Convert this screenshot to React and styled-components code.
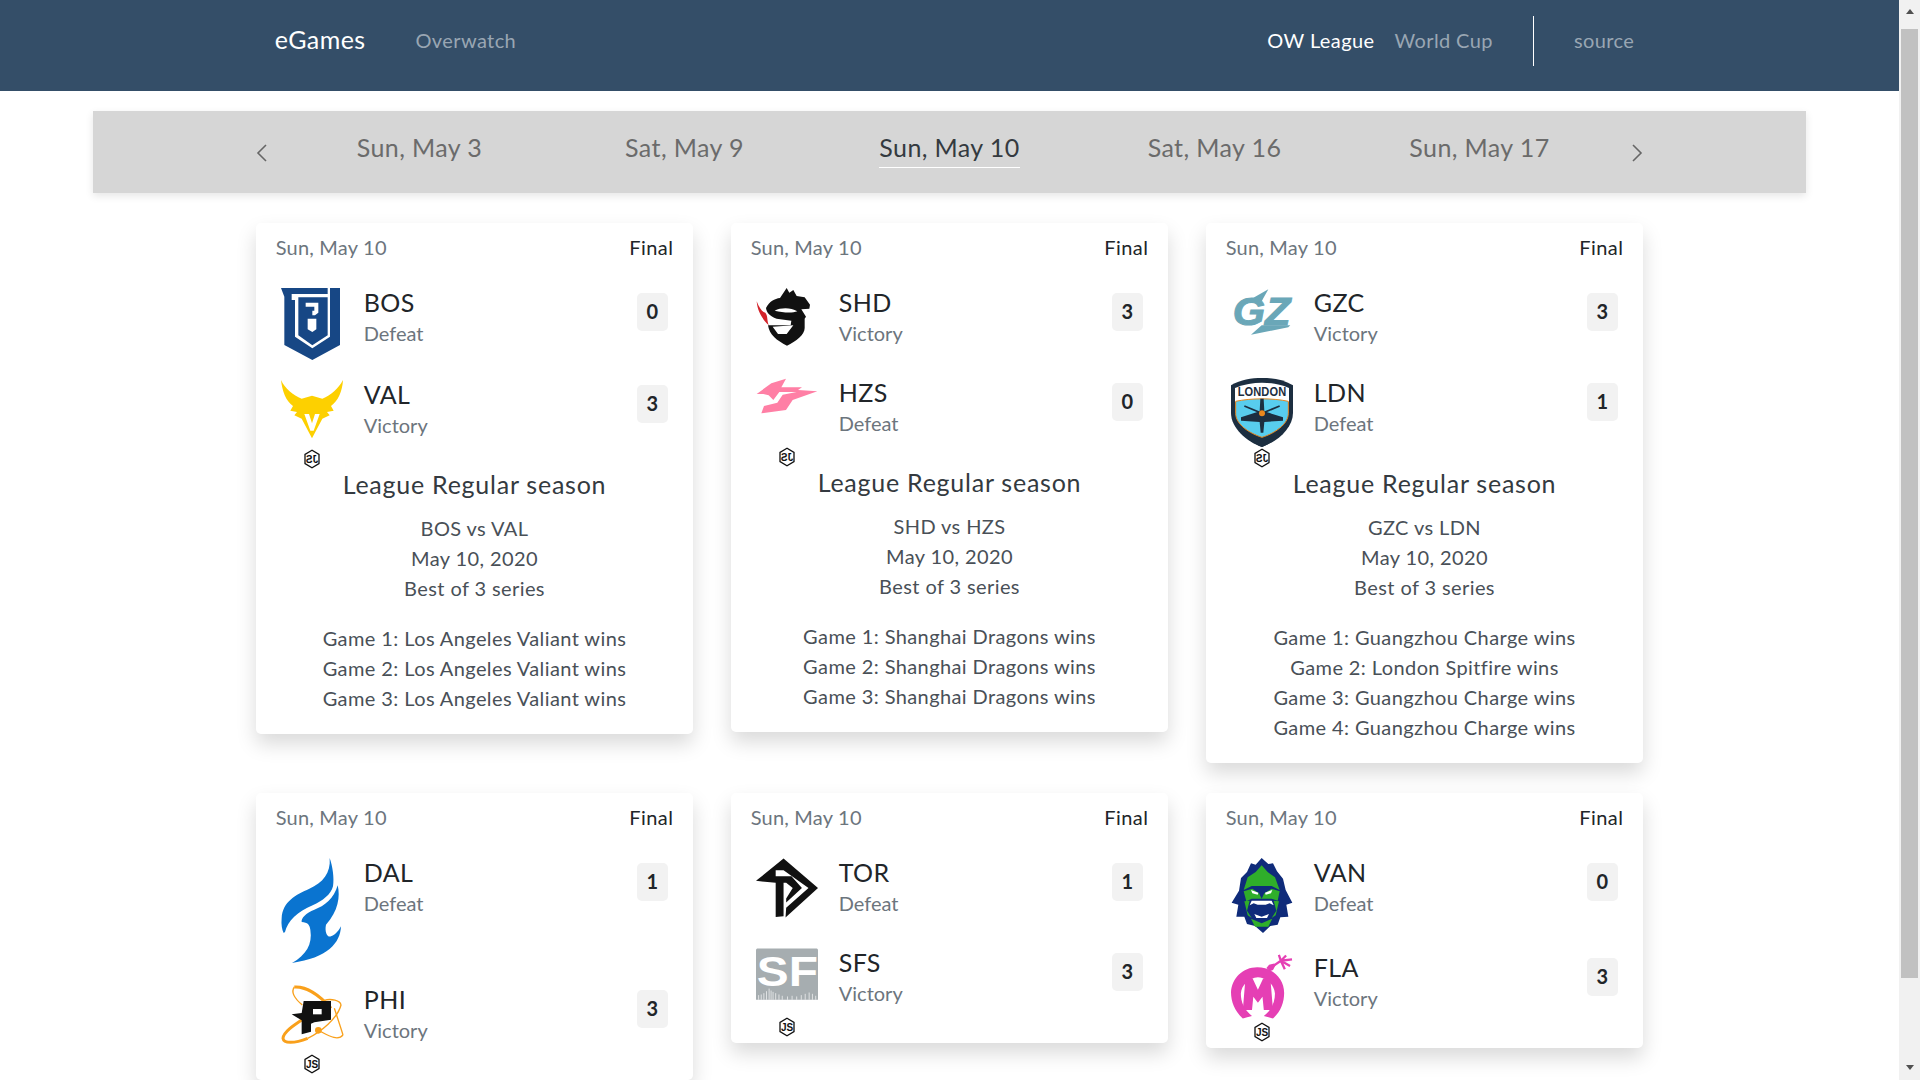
import React from 'react';
import styled, { createGlobalStyle } from 'styled-components';

const GlobalStyle = createGlobalStyle`
  body {
    margin: 0;
    font-family: Lato, "Open Sans", sans-serif;
    font-size: 20px;
    line-height: 1.5;
    letter-spacing: 0.02em;
    color: #212529;
    background: #fff;
  }
  #root {
    width: 1899px;
  }
`;

const Header = styled.header`
  background: #344e68;
  padding: 16px 0 25px;
`;

const HeaderInner = styled.nav`
  width: 1387.5px;
  height: 50px;
  margin: 0 auto;
  display: flex;
  align-items: center;
`;

const Brand = styled.div`
  color: #fff;
  font-size: 25px;
  margin: 0 40px 2px 19px;
`;

const NavLink = styled.div`
  color: ${(p) => (p.$active ? '#fff' : '#99a6b3')};
  padding: 0 ${(p) => (p.$last ? '9px' : '10px')} 2px 10px;
`;

const Spacer = styled.div`
  flex: 1;
`;

const Divider = styled.div`
  width: 1px;
  height: 50px;
  background: #fff;
  margin: 0 30px;
`;

const DateBar = styled.div`
  width: 1713px;
  height: 82px;
  margin: 20px auto 30px;
  background: #d6d6d6;
  box-shadow: 0 3px 8px rgba(0, 0, 0, 0.1);
  display: flex;
  justify-content: center;
`;

const DateInner = styled.div`
  width: 1387.5px;
  display: flex;
  justify-content: space-between;
  align-items: center;
`;

const Chevron = styled.svg`
  width: 12px;
  height: 18px;
  margin-top: 2px;
  fill: none;
  stroke: #666;
  stroke-width: 1.6;
`;

const DateList = styled.div`
  display: grid;
  grid-template-columns: repeat(5, 265px);
  justify-items: center;
  align-self: flex-start;
  padding-top: 18px;
`;

const DateItem = styled.div`
  font-size: 25px;
  color: ${(p) => (p.$active ? '#343a40' : '#6b6b6b')};
  border-bottom: 1px solid ${(p) => (p.$active ? '#fff' : 'transparent')};
`;

const Grid = styled.main`
  width: 1387.5px;
  margin: 0 auto;
  padding-bottom: 100px;
  display: grid;
  grid-template-columns: repeat(3, 437.5px);
  column-gap: 37.5px;
  row-gap: 30px;
  align-items: start;
`;

const Card = styled.article`
  background: #fff;
  border-radius: 5px;
  box-shadow: 0 10px 20px rgba(0, 0, 0, 0.15);
  padding: 9px 20px 6px;
`;

const CardTop = styled.div`
  display: flex;
  justify-content: space-between;
  margin-bottom: 26px;
`;

const CardDate = styled.div`
  color: #6c757d;
  letter-spacing: 0.01em;
`;

const Result = styled.div`
  color: #6c757d;
  letter-spacing: 0;
`;

const TeamRow = styled.div`
  display: grid;
  grid-template-columns: 62px 1fr 31.5px;
  column-gap: 21px;
  padding: 0 5px;
  margin-bottom: ${(p) => (p.$last ? '0' : '20px')};
`;

const LogoColumn = styled.div`
  display: flex;
  flex-direction: column;
  align-items: center;
`;

const LogoSvg = styled.svg`
  display: block;
  width: 62px;
  overflow: visible;
`;

const HexSvg = styled.svg`
  display: block;
  width: 16px;
  height: 20px;
  transform: ${(p) => (p.$mirror ? 'scaleX(-1)' : 'none')};
`;

const TeamName = styled.div`
  font-size: 25px;
  line-height: 30px;
  margin: -1px 0 1px;
`;

const Score = styled.div`
  height: 38px;
  margin-top: 5px;
  padding-bottom: 2px;
  box-sizing: border-box;
  background: #f2f2f2;
  border-radius: 5px;
  display: flex;
  align-items: center;
  justify-content: center;
  font-weight: 700;
`;

const Details = styled.div`
  text-align: center;
  color: #495057;
  padding-bottom: 15px;
`;

const LeagueTitle = styled.div`
  font-size: 25px;
  line-height: 30px;
  letter-spacing: 0.03em;
  color: #343a40;
  margin-bottom: 14px;
`;

const DetailBlock = styled.div`
  margin-bottom: ${(p) => (p.$gap ? '20px' : '0')};
`;

const ScrollBar = styled.div`
  position: fixed;
  top: 0;
  right: 0;
  width: 21px;
  height: 100vh;
  background: #f1f1f1;
  display: flex;
  flex-direction: column;
  align-items: center;
`;

const ScrollArrow = styled.div`
  width: 0;
  height: 0;
  margin: ${(p) => (p.$down ? 'auto 0 10px' : '9px 0 15px')};
  border-left: 4.5px solid transparent;
  border-right: 4.5px solid transparent;
  border-bottom: ${(p) => (p.$down ? '0' : '5px solid #505050')};
  border-top: ${(p) => (p.$down ? '5px solid #505050' : '0')};
`;

const ScrollThumb = styled.div`
  width: 17px;
  height: 949px;
  background: #c1c1c1;
`;

const JsBadge = ({ mirror }) => (
  <HexSvg viewBox="0 0 16 20" $mirror={mirror}>
    <polygon points="8,1.2 15,5.4 15,14.6 8,18.8 1,14.6 1,5.4" fill="#fff" stroke="#111" strokeWidth="1.3" />
    <text x="8" y="13.6" textAnchor="middle" fontFamily="Liberation Sans" fontWeight="700" fontSize="10" letterSpacing="0" fill="#111">JS</text>
  </HexSvg>
);

const BosLogo = () => (
  <LogoSvg viewBox="0 0 186 216" height="72">
    <path fill="#174785" d="M0 0H177V171L94 216 10 171V26Z" />
    <path fill="#fff" d="M32 18H140V0H147V146L94 181 42 146V36H32Z" />
    <path fill="#174785" d="M52 28H140V142L94 172 52 142Z" />
    <path fill="#fff" d="M74 44H112V74L102 82H94V68H100V56H74ZM80 92H106V124L94 132 80 124Z" />
  </LogoSvg>
);

const ValLogo = () => (
  <LogoSvg viewBox="0 0 186 207" height="69">
    <path fill="#fdd000" d="M0 0C12 26 36 46 62 56L93 47 124 56C150 46 172 26 186 0 184 34 172 62 150 78L158 92 138 96 146 106 124 116 93 175 62 116 40 106 48 96 28 92 36 78C14 62 4 34 0 0Z" />
    <path fill="#fff" d="M70 102H84L93 130 102 102H116L98 152H88Z" />
  </LogoSvg>
);

const ShdLogo = () => (
  <LogoSvg viewBox="0 0 186 210" height="70">
    <path fill="#111" d="M30 60C40 40 56 32 72 30L92 0 100 14 112 6 122 24 146 28 162 50 160 62 136 64 150 86 146 92V120C146 140 120 160 93 173 62 158 40 140 36 112L104 112 106 98 62 92C40 84 32 74 30 60Z" />
    <path fill="#fff" d="M56 68C76 58 104 58 124 70 108 76 80 74 56 68ZM50 116 112 112 92 138 66 138Z" />
    <path fill="#d3232a" d="M2 40C4 60 10 84 38 112 32 92 36 84 28 74 18 72 10 60 2 40Z" />
  </LogoSvg>
);

const HzsLogo = () => (
  <LogoSvg viewBox="0 0 186 207" height="69">
    <path fill="#ff7fa5" d="M2 48 46 16 90 2 76 28H138L126 36 184 40 110 66 90 96 16 106 24 84 64 74 80 50 122 42H70L52 66 38 52 22 48Z" />
  </LogoSvg>
);

const GzcLogo = () => (
  <LogoSvg viewBox="0 0 186 210" height="70">
    <polygon fill="#6aa7b8" points="66,30 112,4 92,40" />
    <polygon fill="#6aa7b8" points="92,112 178,112 172,118 60,140" />
    <text x="5" y="110" fontFamily="Liberation Sans" fontWeight="700" fontStyle="italic" fontSize="118" fill="#6aa7b8" stroke="#6aa7b8" strokeWidth="3" textLength="174" lengthAdjust="spacingAndGlyphs">GZ</text>
  </LogoSvg>
);

const LdnLogo = () => (
  <LogoSvg viewBox="0 0 186 210" height="70">
    <path fill="#1c2e40" d="M0 22C30 4 60 0 93 0 126 0 156 4 186 22V104C186 150 140 190 93 207 46 190 0 150 0 104Z" />
    <path fill="#fff" d="M12 30C40 18 66 14 93 14 120 14 146 18 174 30V72H12Z" />
    <path fill="#58cdee" d="M14 70C60 60 126 60 172 70V106C172 140 130 166 93 178 56 166 14 140 14 106Z" stroke="#e9871e" strokeWidth="3" />
    <text x="93" y="54" textAnchor="middle" fontFamily="Liberation Sans" fontWeight="700" fontSize="36" fill="#1c2e40" textLength="146" lengthAdjust="spacingAndGlyphs">LONDON</text>
    <path fill="#1c2e40" d="M88 62H98L100 100 156 118V128L100 132 97 164H89L86 132 30 128V118L86 100Z" />
    <path stroke="#1c2e40" strokeWidth="5" d="M40 84 93 106 146 84" fill="none" />
    <path fill="#1c2e40" d="M14 140C40 170 70 185 93 190 116 185 146 170 172 140 150 176 120 196 93 207 66 196 36 176 14 140Z" />
    <circle cx="93" cy="106" r="9" fill="#e9871e" />
  </LogoSvg>
);

const DalLogo = () => (
  <LogoSvg viewBox="0 0 186 321" height="107">
    <path fill="#0a74d0" d="M146 0C150 45 125 75 85 92 45 110 5 130 2 180 0 200 3 215 8 225L12 222C20 190 50 160 95 142 125 128 150 110 156 85 160 60 155 25 146 0Z" />
    <path fill="#0a74d0" d="M170 82C178 115 172 160 135 200 130 222 140 240 150 235 165 230 175 215 180 205 178 255 140 300 33 315 75 290 95 260 88 215 86 200 80 193 62 192 60 180 75 165 100 155 130 145 160 120 170 82Z" />
  </LogoSvg>
);

const PhiLogo = () => (
  <LogoSvg viewBox="0 0 186 207" height="69">
    <g fill="none" stroke="#f9a01b">
      <path strokeWidth="9" d="M40 6C70 4 110 24 150 70" />
      <path strokeWidth="4" d="M40 6C30 20 40 40 64 60" />
      <path strokeWidth="9" d="M70 100C40 120 8 140 6 160 8 176 40 176 80 160" />
      <path strokeWidth="4" d="M80 160C120 140 170 100 180 60 178 46 150 40 130 46" />
      <path strokeWidth="4" d="M112 136C140 150 170 170 186 150" />
      <path strokeWidth="4" d="M160 70C170 100 180 130 186 150" />
    </g>
    <path fill="#111" d="M68 48H150V104L100 112 90 116V140L62 148V106L32 88 62 84Z" />
    <path fill="#fff" d="M96 72H122V88H96Z" />
    <circle cx="112" cy="136" r="10" fill="#f9a01b" />
  </LogoSvg>
);

const TorLogo = () => (
  <LogoSvg viewBox="0 0 189 210" height="70">
    <path fill="#111" d="M84 0 189 90 90 180 92 150 160 90 84 36 60 36V54H108L140 90 92 134V122L112 90 92 74H84V176L60 178V74L0 68Z" />
  </LogoSvg>
);

const SfsLogo = () => (
  <LogoSvg viewBox="0 0 189 207" height="69">
    <path fill="#a6adb0" d="M0 6C0 2 2 0 6 0H183C187 0 189 2 189 6V156H0Z" />
    <text x="2" y="113" fontFamily="Liberation Sans" fontWeight="700" fontSize="129" fill="#fff" textLength="187" lengthAdjust="spacingAndGlyphs">SF</text>
    <path stroke="#fff" strokeWidth="2" d="M8 156V142M16 156V140M24 156V136M32 156V130M40 156V122M46 156V128M52 156V132M60 156V136M70 156V140M80 156V144M96 156V146M110 156V144M124 156V146M138 156V142M150 156V138M162 156V134M172 156V138M182 156V144" />
  </LogoSvg>
);

const VanLogo = () => (
  <LogoSvg viewBox="0 0 186 225" height="75">
    <path fill="#0f2b7a" d="M92 0 112 18 126 16 138 40 156 62 164 96 184 134 166 140 172 176 148 178 140 200 118 204 96 225 72 204 48 198 40 176 16 176 22 140 2 134 24 98 30 60 48 42 60 16 74 20Z" />
    <path fill="#2fae2a" d="M92 22 110 42 132 58 146 96 122 84H62L38 96 50 58 74 42ZM38 100 64 92 84 106 92 122 100 106 122 92 146 100 140 128 122 122H62L46 130ZM40 130 56 128 48 158 62 180 50 172ZM144 130 128 128 136 158 122 180 134 172ZM60 182 92 196 124 182 112 206H72Z" />
    <path fill="#fff" d="M60 96 82 104 80 110 64 106ZM124 96 102 104 104 110 120 106ZM62 128H122L128 142 116 136 104 140H80L68 136 56 142ZM70 168 92 176 114 168 108 180H76Z" />
  </LogoSvg>
);

const FlaLogo = () => (
  <LogoSvg viewBox="0 0 189 207" height="69">
    <path fill="#e53fb4" d="M80 42C128 42 162 76 162 120 162 148 152 176 128 198L100 190C124 172 134 148 134 122 132 96 110 74 82 72 54 74 32 96 30 122 30 148 40 172 64 190L36 198C12 176 0 148 0 118 2 76 36 42 80 42Z" />
    <path fill="#e53fb4" d="M44 76H66L82 110 98 76H120L128 172 100 172 96 132 82 150 68 132 64 172 36 172Z" />
    <path fill="#e53fb4" d="M108 44 116 34 132 30 136 36 128 50 118 54Z" />
    <path stroke="#e53fb4" strokeWidth="7" fill="none" d="M126 40 152 22M152 22 146 4M152 22 168 6M152 22 186 18M152 22 180 38M152 22 164 48" />
  </LogoSvg>
);

const matches = [
  {
    id: 'bv',
    teams: [
      { name: 'BOS', result: 'Defeat', score: 0, logo: <BosLogo /> },
      { name: 'VAL', result: 'Victory', score: 3, logo: <ValLogo /> },
    ],
    title: 'BOS vs VAL',
    games: ['Game 1: Los Angeles Valiant wins', 'Game 2: Los Angeles Valiant wins', 'Game 3: Los Angeles Valiant wins'],
  },
  {
    id: 'sh',
    teams: [
      { name: 'SHD', result: 'Victory', score: 3, logo: <ShdLogo /> },
      { name: 'HZS', result: 'Defeat', score: 0, logo: <HzsLogo /> },
    ],
    title: 'SHD vs HZS',
    games: ['Game 1: Shanghai Dragons wins', 'Game 2: Shanghai Dragons wins', 'Game 3: Shanghai Dragons wins'],
  },
  {
    id: 'gl',
    teams: [
      { name: 'GZC', result: 'Victory', score: 3, logo: <GzcLogo /> },
      { name: 'LDN', result: 'Defeat', score: 1, logo: <LdnLogo /> },
    ],
    title: 'GZC vs LDN',
    games: ['Game 1: Guangzhou Charge wins', 'Game 2: London Spitfire wins', 'Game 3: Guangzhou Charge wins', 'Game 4: Guangzhou Charge wins'],
  },
  {
    id: 'dp',
    teams: [
      { name: 'DAL', result: 'Defeat', score: 1, logo: <DalLogo /> },
      { name: 'PHI', result: 'Victory', score: 3, logo: <PhiLogo /> },
    ],
  },
  {
    id: 'ts',
    teams: [
      { name: 'TOR', result: 'Defeat', score: 1, logo: <TorLogo /> },
      { name: 'SFS', result: 'Victory', score: 3, logo: <SfsLogo /> },
    ],
  },
  {
    id: 'vf',
    teams: [
      { name: 'VAN', result: 'Defeat', score: 0, logo: <VanLogo /> },
      { name: 'FLA', result: 'Victory', score: 3, logo: <FlaLogo /> },
    ],
  },
];

const dates = ['Sun, May 3', 'Sat, May 9', 'Sun, May 10', 'Sat, May 16', 'Sun, May 17'];

function MatchCard({ match }) {
  return (
    <Card>
      <CardTop>
        <CardDate>Sun, May 10</CardDate>
        <div>Final</div>
      </CardTop>
      {match.teams.map((team, i) => (
        <TeamRow key={team.name} $last={i === 1}>
          <LogoColumn>
            {team.logo}
            {i === 1 && <JsBadge mirror={!!match.games} />}
          </LogoColumn>
          <div>
            <TeamName>{team.name}</TeamName>
            <Result>{team.result}</Result>
          </div>
          <Score>{team.score}</Score>
        </TeamRow>
      ))}
      {match.games && (
        <Details>
          <LeagueTitle>League Regular season</LeagueTitle>
          <DetailBlock $gap>
            <div>{match.title}</div>
            <div>May 10, 2020</div>
            <div>Best of 3 series</div>
          </DetailBlock>
          <DetailBlock>
            {match.games.map((game, i) => (
              <div key={i}>{game}</div>
            ))}
          </DetailBlock>
        </Details>
      )}
    </Card>
  );
}

export default function App() {
  return (
    <>
      <GlobalStyle />
      <Header>
        <HeaderInner>
          <Brand>eGames</Brand>
          <NavLink>Overwatch</NavLink>
          <Spacer />
          <NavLink $active>OW League</NavLink>
          <NavLink>World Cup</NavLink>
          <Divider />
          <NavLink $last>source</NavLink>
        </HeaderInner>
      </Header>
      <DateBar>
        <DateInner>
          <Chevron viewBox="0 0 12 18"><polyline points="10,1 2,9 10,17" /></Chevron>
          <DateList>
            {dates.map((d) => (
              <DateItem key={d} $active={d === 'Sun, May 10'}>{d}</DateItem>
            ))}
          </DateList>
          <Chevron viewBox="0 0 12 18"><polyline points="2,1 10,9 2,17" /></Chevron>
        </DateInner>
      </DateBar>
      <Grid>
        {matches.map((m) => (
          <MatchCard key={m.id} match={m} />
        ))}
      </Grid>
      <ScrollBar>
        <ScrollArrow />
        <ScrollThumb />
        <ScrollArrow $down />
      </ScrollBar>
    </>
  );
}
